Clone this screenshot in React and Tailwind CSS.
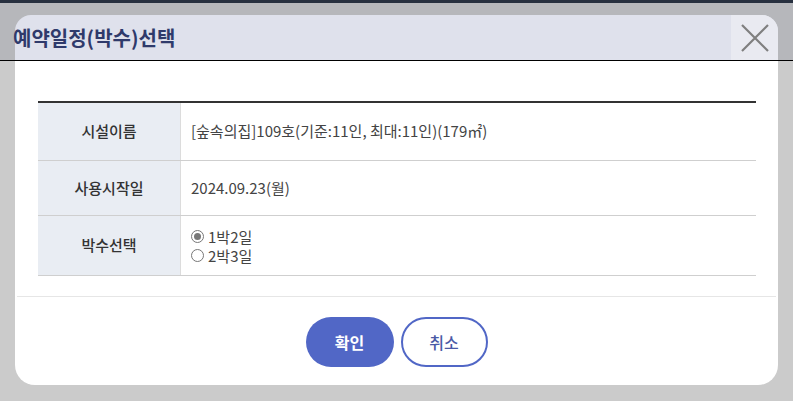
import React from "react";

const FONT = { fontFamily: '"Noto Sans CJK KR", "Noto Sans", sans-serif' };

function Radio({ checked, label }) {
  return (
    <label className="flex items-center gap-[4px] h-[19px]">
      <span className="w-[13px] h-[13px] rounded-full border border-[#777] flex items-center justify-center bg-white">
        {checked && <span className="w-[7px] h-[7px] rounded-full bg-[#777]" />}
      </span>
      <span className="leading-[19px]">{label}</span>
    </label>
  );
}

export default function App() {
  const rows = [
    { h: "h-[58px]", label: "시설이름", value: "[숲속의집]109호(기준:11인, 최대:11인)(179㎡)" },
    { h: "h-[55px]", label: "사용시작일", value: "2024.09.23(월)" },
  ];
  return (
    <div className="w-[793px] h-[401px] bg-[#cbcbcb] overflow-hidden" style={FONT}>
      <div className="h-[3px] bg-[#27303f]" />
      <div className="h-[58px] bg-[#b6b7bb] border-b border-black px-[15px] flex items-end">
        <div className="flex-1 h-[45px] bg-[#dfe1ec] rounded-t-[16px] flex items-center justify-between overflow-visible">
          <span className="-ml-[2px] text-[20px] font-semibold text-[#2f3a6b] leading-none">예약일정(박수)선택</span>
          <div className="w-[47px] h-full bg-[#e9eaf1] rounded-tr-[16px] flex items-center justify-center">
            <svg width="30" height="30" viewBox="0 0 30 30">
              <path d="M2 2 L28 28 M28 2 L2 28" stroke="#7f7f7f" strokeWidth="2.2" fill="none" />
            </svg>
          </div>
        </div>
      </div>
      <div className="mx-[15px] h-[324px] bg-white rounded-b-[20px] flex flex-col">
        <div className="pt-[40px] pl-[23px] pr-[22px]">
          <div className="border-t-2 border-[#333]">
            {rows.map((r) => (
              <div key={r.label} className={`flex ${r.h} border-b border-[#cfcfcf] text-[15px]`}>
                <div className="w-[143px] bg-[#e9edf3] border-r border-[#dcdcdc] flex items-center justify-center font-medium text-[#333]">
                  {r.label}
                </div>
                <div className="flex-1 flex items-center pl-[10px] text-[#444]">{r.value}</div>
              </div>
            ))}
            <div className="flex h-[60px] border-b border-[#cfcfcf] text-[15px]">
              <div className="w-[143px] bg-[#e9edf3] border-r border-[#dcdcdc] flex items-center justify-center font-medium text-[#333]">
                박수선택
              </div>
              <div className="flex-1 flex flex-col justify-center pl-[10px] text-[#444]">
                <Radio checked label="1박2일" />
                <Radio label="2박3일" />
              </div>
            </div>
          </div>
        </div>
        <div className="mt-[20px] mx-[2px] border-t border-[#e6e6e6]" />
        <div className="mt-[20px] flex justify-center gap-[7px]">
          <button className="w-[88px] h-[50px] rounded-full bg-[#5167c6] text-white text-[16px] font-semibold">
            확인
          </button>
          <button className="w-[87px] h-[50px] rounded-full border-2 border-[#5167c6] bg-white text-[#4a5aa6] text-[16px] font-medium">
            취소
          </button>
        </div>
      </div>
    </div>
  );
}
